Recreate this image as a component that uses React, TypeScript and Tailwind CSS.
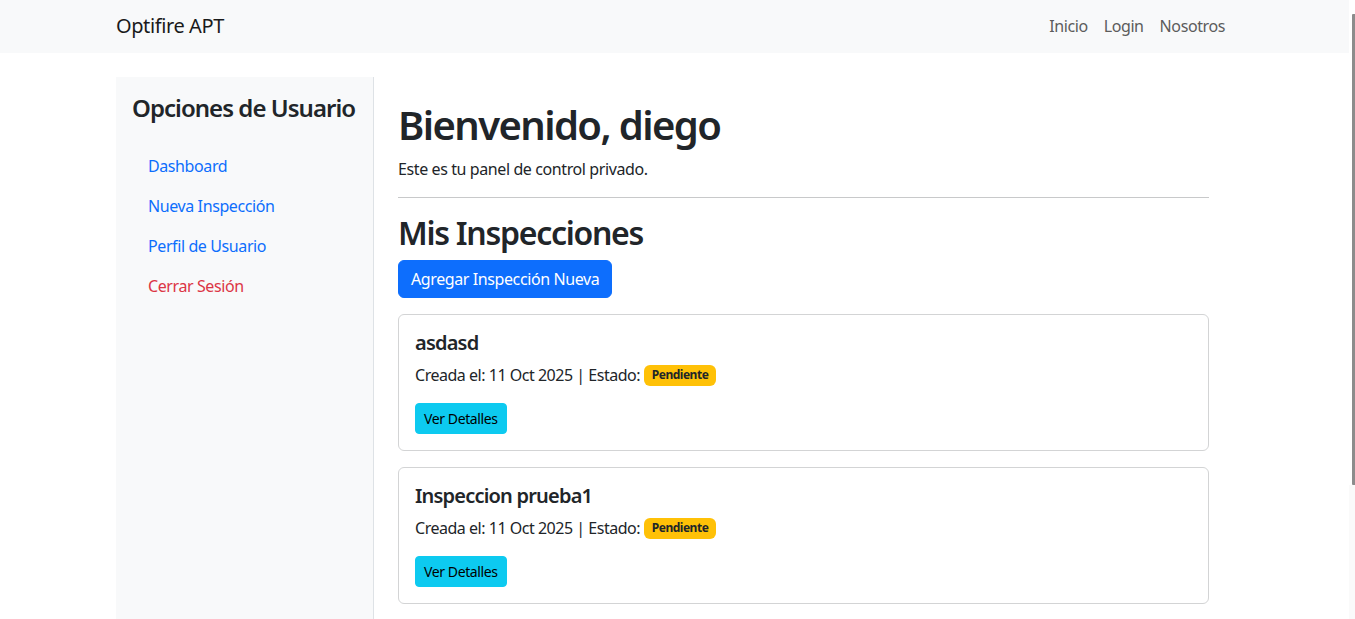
import React from "react";

const cards = [
  { title: "asdasd", date: "11 Oct 2025" },
  { title: "Inspeccion prueba1", date: "11 Oct 2025" },
];

export default function App() {
  return (
    <div className="flex h-[619px] w-full overflow-hidden bg-white font-['Noto_Sans',sans-serif] tracking-[-0.025em] text-[#212529]">
      <div className="flex min-w-0 flex-1 flex-col">
        <nav className="h-[53px] shrink-0 bg-[#f8f9fa]">
          <div className="mx-auto flex h-full w-full max-w-[1141px] items-center justify-between px-3">
            <span className="pb-[2px] text-[20px] leading-[30px] text-[#1a1a1a]">Optifire APT</span>
            <div className="flex items-center pb-[2px] text-[16px] leading-[24px] text-[#5c5c5c]">
              <span className="px-2">Inicio</span>
              <span className="px-2">Login</span>
              <span className="px-2">Nosotros</span>
            </div>
          </div>
        </nav>
        <div className="mx-auto mt-6 flex w-full max-w-[1141px] flex-1 px-3">
          <aside className="w-[258px] shrink-0 border-r border-[#dee2e6] bg-[#f8f9fa] p-4">
            <h4 className="whitespace-nowrap text-[24px] font-semibold leading-[29px] tracking-[-0.04em]">Opciones de Usuario</h4>
            <ul className="mt-6 flex flex-col text-[16px] leading-[24px]">
              <li className="px-4 py-2 text-[#0d6efd]">Dashboard</li>
              <li className="px-4 py-2 text-[#0d6efd]">Nueva Inspección</li>
              <li className="px-4 py-2 text-[#0d6efd]">Perfil de Usuario</li>
              <li className="px-4 py-2 text-[#dc3545]">Cerrar Sesión</li>
            </ul>
          </aside>
          <main className="min-w-0 flex-1 p-6">
            <h1 className="mb-2 text-[40px] font-semibold leading-[48px] tracking-[-0.04em]">Bienvenido, diego</h1>
            <p className="mb-4 text-[16px] leading-[24px]">Este es tu panel de control privado.</p>
            <hr className="my-4 border-t border-[#c8c9ca]" />
            <h2 className="mb-2 text-[32px] font-semibold leading-[38px] tracking-[-0.04em]">Mis Inspecciones</h2>
            <button className="mb-4 rounded-[6px] border border-[#0d6efd] bg-[#0d6efd] px-3 py-[6px] text-[16px] leading-[24px] text-white">
              Agregar Inspección Nueva
            </button>
            <div className="flex flex-col gap-4">
              {cards.map((c) => (
                <div key={c.title} className="rounded-[6px] border border-[#d3d4d5] p-4">
                  <h5 className="mb-2 text-[20px] font-semibold leading-[24px] tracking-[-0.04em]">{c.title}</h5>
                  <p className="mb-4 flex items-center text-[16px] leading-[24px] tracking-[-0.03em]">
                    <span>Creada el: {c.date} | Estado:&nbsp;</span>
                    <span className="flex h-[21px] items-center rounded-[6px] bg-[#ffc107] px-[8px] text-[12px] font-bold leading-[12px] text-[#212529]">
                      Pendiente
                    </span>
                  </p>
                  <button className="rounded-[4px] border border-[#0dcaf0] bg-[#0dcaf0] px-2 py-1 text-[14px] leading-[21px] text-black">
                    Ver Detalles
                  </button>
                </div>
              ))}
            </div>
          </main>
        </div>
      </div>
      <div className="flex w-[6px] shrink-0 flex-col bg-[#fafafa]">
        <div className="h-[14px] bg-white" />
        <div className="flex h-[471px] bg-white pl-[3px]">
          <div className="flex-1 rounded-l-[1px] bg-[#8c8c8c]" />
        </div>
      </div>
    </div>
  );
}
